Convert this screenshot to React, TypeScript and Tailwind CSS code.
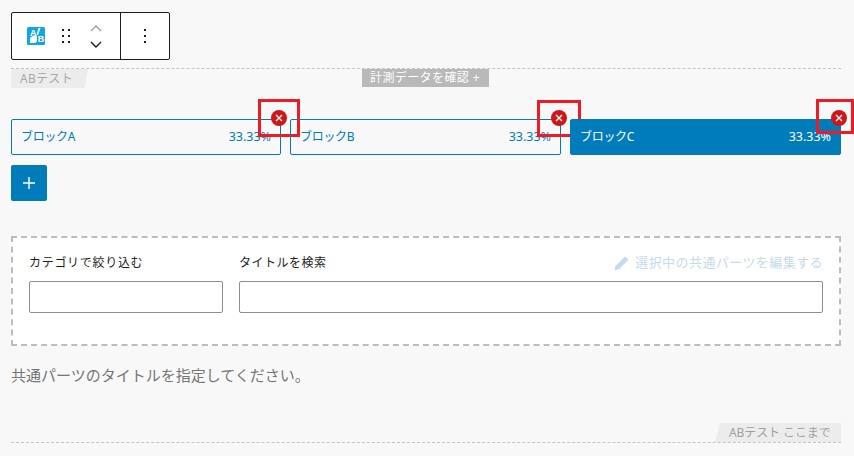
import React from "react";

const font = { fontFamily: '"Noto Sans", "Noto Sans CJK JP", sans-serif' };

function Tab({ name, active, box, className }: { name: string; active?: boolean; box: string; className: string }) {
  return (
    <div className={"relative " + className}>
      <div
        className={
          "flex h-9 items-center justify-between rounded-[2px] border border-[#007cba] pl-[9px] pr-[9px] text-[12px] " +
          (active ? "bg-[#007cba] text-white" : "text-[#007cba]")
        }
      >
        <span className="tracking-[-0.3px]">{name}</span>
        <span className="text-[12.5px]">33.33%</span>
      </div>
      <div className="absolute right-[-6px] top-[-9px] flex h-4 w-4 items-center justify-center rounded-full bg-[#cc1818]">
        <svg width="10" height="10" viewBox="0 0 10 10" fill="none" stroke="white" strokeWidth="1.3">
          <path d="M2 2 8 8M8 2 2 8" />
        </svg>
      </div>
      <div className={"absolute border-[3.5px] border-[#ed1c24] " + box} />
    </div>
  );
}

export default function App() {
  return (
    <div className="h-[456px] w-[854px] overflow-hidden bg-[#f8f8f8] pl-[11px] pr-[13px] pt-3" style={font}>
      <div className="flex h-[48px] w-[159px] rounded-[2px] border border-[#1e1e1e] bg-white">
        <div className="flex w-[109px] items-center border-r border-[#1e1e1e] pl-[15px]">
          <svg width="18" height="18" viewBox="0 0 18 18">
            <rect width="18" height="18" rx="1.5" fill="#12a5e4" />
            <path d="M3 16v-5l3-2.500h3.500l.5 2.500v3l-1.500 2z" fill="#fff" />
            <path d="M11.500 1 13.500 1 11 8 9.500 8z" fill="#fff" />
            <text x="3" y="8.500" fontSize="9" fontWeight="700" fill="#fff" style={{ fontFamily: '"Liberation Sans", sans-serif' }}>A</text>
            <text x="10.800" y="15" fontSize="9" fontWeight="700" fill="#fff" style={{ fontFamily: '"Liberation Sans", sans-serif' }}>B</text>
          </svg>
          <svg className="ml-[16px]" width="12" height="16" viewBox="0 0 12 16" fill="#1e1e1e">
            <rect x="1" y="1" width="2" height="2" /><rect x="7" y="1" width="2" height="2" />
            <rect x="1" y="7" width="2" height="2" /><rect x="7" y="7" width="2" height="2" />
            <rect x="1" y="13" width="2" height="2" /><rect x="7" y="13" width="2" height="2" />
          </svg>
          <div className="ml-[17px] flex flex-col items-center gap-[9px]">
            <svg width="12" height="7" viewBox="0 0 12 7" fill="none" stroke="#9a9a9a" strokeWidth="1.4"><path d="M1 6l5-5 5 5" /></svg>
            <svg width="12" height="7" viewBox="0 0 12 7" fill="none" stroke="#1e1e1e" strokeWidth="1.4"><path d="M1 1l5 5 5-5" /></svg>
          </div>
        </div>
        <div className="flex flex-1 items-center justify-center">
          <svg width="4" height="16" viewBox="0 0 4 16" fill="#1e1e1e">
            <rect x="1" y="1" width="2" height="2" /><rect x="1" y="7" width="2" height="2" /><rect x="1" y="13" width="2" height="2" />
          </svg>
        </div>
      </div>

      <div className="relative mt-2 flex h-[20px] justify-center border-t border-dashed border-[#c4c4c4]">
        <div className="absolute left-0 top-0 flex h-[19px] w-[77px] items-center bg-[#ececec] pl-[9px] text-[12px] tracking-[0.3px] text-[#a8a8a8] [clip-path:polygon(0_0,100%_0,96%_100%,0_100%)]">
          ABテスト
        </div>
        <div className="flex h-[18px] w-[127px] -translate-x-[1px] items-center justify-center bg-[#b9b9b9] text-[12px] tracking-[0.4px] text-white">
          計測データを確認 +
        </div>
      </div>

      <div className="mt-[31px] flex gap-[9px]">
        <Tab className="w-[270px] shrink-0" name="ブロックA" box="right-[-19px] top-[-20px] h-[38px] w-[42px]" />
        <Tab className="flex-1" name="ブロックB" box="right-[-20px] top-[-19px] h-[37px] w-[44px]" />
        <Tab className="flex-1" name="ブロックC" active box="right-[-13px] top-[-20px] h-[35px] w-[38px]" />
      </div>

      <div className="mt-[10px] flex h-9 w-9 items-center justify-center rounded-[2px] bg-[#007cba]">
        <svg width="12" height="12" viewBox="0 0 12 12" stroke="white" strokeWidth="1.4"><path d="M6 0v12M0 6h12" /></svg>
      </div>

      <div className="mt-[35px] h-[110px] border-2 border-dashed border-[#bdbdbd] bg-white pl-4 pr-4 pt-[15px]">
        <div className="flex gap-4">
          <div className="w-[194px] shrink-0">
            <div className="flex h-[20px] items-center text-[12px] tracking-[0.7px] text-[#1e1e1e]">カテゴリで絞り込む</div>
            <div className="mt-2 h-8 rounded-[2px] border border-[#8c8f94] bg-white" />
          </div>
          <div className="min-w-0 flex-1">
            <div className="flex h-[20px] items-center justify-between text-[12px] tracking-[0.5px] text-[#1e1e1e]">
              <span>タイトルを検索</span>
              <span className="flex items-center gap-[6px] text-[13px] tracking-[0.43px] text-[#c5daec]">
                <svg width="15" height="16" viewBox="0 0 15 16" fill="#c5daec"><path d="M11 1.500l3.500 3L5.500 14 .5 15.500 1.500 11z" /></svg>
                選択中の共通パーツを編集する
              </span>
            </div>
            <div className="mt-2 h-8 rounded-[2px] border border-[#8c8f94] bg-white" />
          </div>
        </div>
      </div>

      <p className="mt-[18px] text-[15px] leading-[22px] text-[#757575]">共通パーツのタイトルを指定してください。</p>

      <div className="mt-[37px] flex h-[20px] justify-end border-b border-dashed border-[#c4c4c4]">
        <div className="flex w-[126px] items-center bg-[#ececec] pl-[14px] text-[12px] tracking-[-0.1px] text-[#a0a0a0] [clip-path:polygon(4%_0,100%_0,100%_100%,0_100%)]">
          ABテスト ここまで
        </div>
      </div>
    </div>
  );
}
